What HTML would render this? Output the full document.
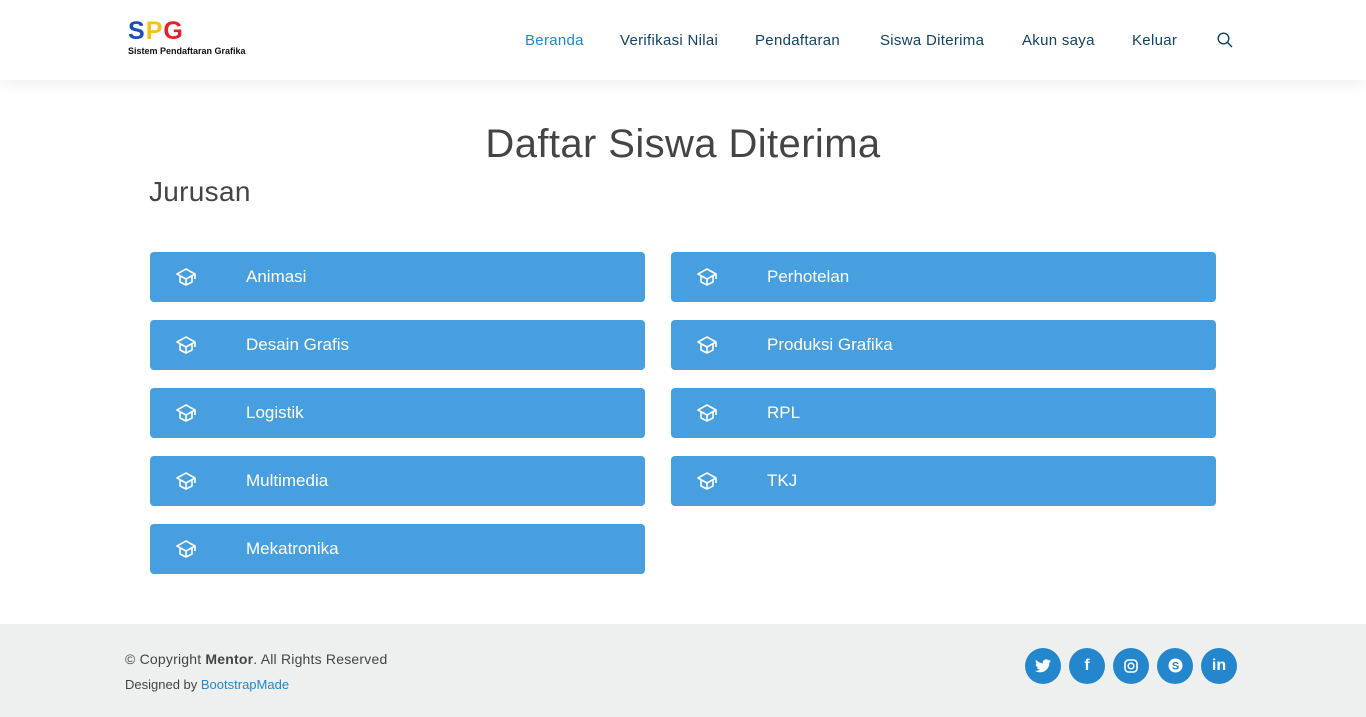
<!DOCTYPE html>
<html><head><style>
body{margin:0;width:1366px;height:717px;overflow:hidden;font-family:"Liberation Sans",sans-serif;background:#fff;position:relative}
.hdr{position:absolute;top:0;left:0;width:1366px;height:80px;background:#fff;box-shadow:0 2px 15px rgba(0,0,0,.08)}
.logo{position:absolute;left:128px;top:17px}
.logo .big{font-weight:bold;font-size:25px;letter-spacing:1px;line-height:28px}
.logo .sm{font-size:9px;font-weight:bold;color:#111;margin-top:1px}
.nav{position:absolute;top:32px;font-size:15px;color:#124265;letter-spacing:0.3px}
.nav span{position:absolute;white-space:nowrap}
h1{position:absolute;top:122px;left:0;width:1366px;text-align:center;margin:0;font-weight:normal;font-size:40px;color:#444;letter-spacing:0.4px}
h2{position:absolute;top:176px;left:149px;margin:0;font-weight:normal;font-size:28px;color:#444;letter-spacing:0.3px}
.b{position:absolute;height:50px;background:#479fdf;border-radius:4px;color:#fff;font-size:17px}
.b svg{position:absolute;left:25px;top:15px}
.b span{position:absolute;left:96px;top:15px}
.ft{position:absolute;top:624px;left:0;width:1366px;height:93px;background:#eef0ef}
.c{position:absolute;left:125px;top:27px;font-size:14px;color:#444;letter-spacing:0.2px}
.d{position:absolute;left:125px;top:53px;font-size:13px;color:#444}
.s{position:absolute;top:24px;width:36px;height:36px;border-radius:50%;background:#2487ce;color:#fff;font-weight:bold;text-align:center;line-height:36px;font-size:16px}
</style></head><body>
<div class="hdr">
<div class="logo"><div class="big"><span style="color:#1a4fb8">S</span><span style="color:#f2c318">P</span><span style="color:#e8202a">G</span></div><div class="sm">Sistem Pendaftaran Grafika</div></div>
<div class="nav">
<span style="left:525px;color:#2487ce">Beranda</span>
<span style="left:620px">Verifikasi Nilai</span>
<span style="left:755px">Pendaftaran</span>
<span style="left:880px">Siswa Diterima</span>
<span style="left:1022px">Akun saya</span>
<span style="left:1132px">Keluar</span>
<svg style="position:absolute;left:1217px;top:0px" width="16" height="16" viewBox="0 0 16 16" fill="none" stroke="#124265" stroke-width="1.4"><circle cx="6.5" cy="6.5" r="5.3"/><path d="M10.5 10.5L15 15"/></svg>
</div></div>
<h1>Daftar Siswa Diterima</h1>
<h2>Jurusan</h2>
<div id="btns"></div>
<script>
const L=["Animasi","Desain Grafis","Logistik","Multimedia","Mekatronika"],R=["Perhotelan","Produksi Grafika","RPL","TKJ"];
const ic='<svg width="22" height="20" viewBox="0 0 22 20" fill="none" stroke="#fff" stroke-width="1.6" stroke-linejoin="round"><path d="M11 2L2 7l9 5 9-5z"/><path d="M5 9v6l6 3 6-3V9"/><path d="M11 12v6"/><path d="M20 7v5"/></svg>';
let h='';L.forEach((t,i)=>h+=`<div class="b" style="left:150px;width:495px;top:${252+68*i}px">${ic}<span>${t}</span></div>`);
R.forEach((t,i)=>h+=`<div class="b" style="left:671px;width:545px;top:${252+68*i}px">${ic}<span>${t}</span></div>`);
document.getElementById('btns').innerHTML=h;
</script>
<div class="ft">
<div class="c">© Copyright <b>Mentor</b>. All Rights Reserved</div>
<div class="d">Designed by <span style="color:#2487ce">BootstrapMade</span></div>
<div class="s" style="left:1025px"><svg width="16" height="14" viewBox="0 0 24 20" style="margin-top:11px" fill="#fff"><path d="M24 2.4a10 10 0 0 1-2.8.8A5 5 0 0 0 23.300.4a10 10 0 0 1-3.1 1.2A4.9 4.9 0 0 0 11.8 6 14 14 0 0 1 1.7.9a4.9 4.9 0 0 0 1.5 6.6 5 5 0 0 1-2.2-.6 4.9 4.9 0 0 0 3.9 4.9 5 5 0 0 1-2.2.1 4.9 4.9 0 0 0 4.6 3.4A9.9 9.9 0 0 1 0 17.3 14 14 0 0 0 7.5 19.5c9 0 14-7.5 14-14v-.6A10 10 0 0 0 24 2.4z"/></svg></div>
<div class="s" style="left:1069px">f</div>
<div class="s" style="left:1113px"><svg width="14" height="14" viewBox="0 0 14 14" style="margin-top:11px" fill="none" stroke="#fff" stroke-width="1.6"><rect x="1" y="1" width="12" height="12" rx="3.5"/><circle cx="7" cy="7" r="2.8"/></svg></div>
<div class="s" style="left:1157px"><svg width="15" height="15" viewBox="0 0 15 15" style="margin-top:10px"><circle cx="7.5" cy="7.5" r="7" fill="#fff"/><text x="7.5" y="11.5" text-anchor="middle" font-size="11" font-weight="bold" fill="#2487ce" font-family="Liberation Sans">S</text></svg></div>
<div class="s" style="left:1201px">in</div>
</div>
</body></html>
